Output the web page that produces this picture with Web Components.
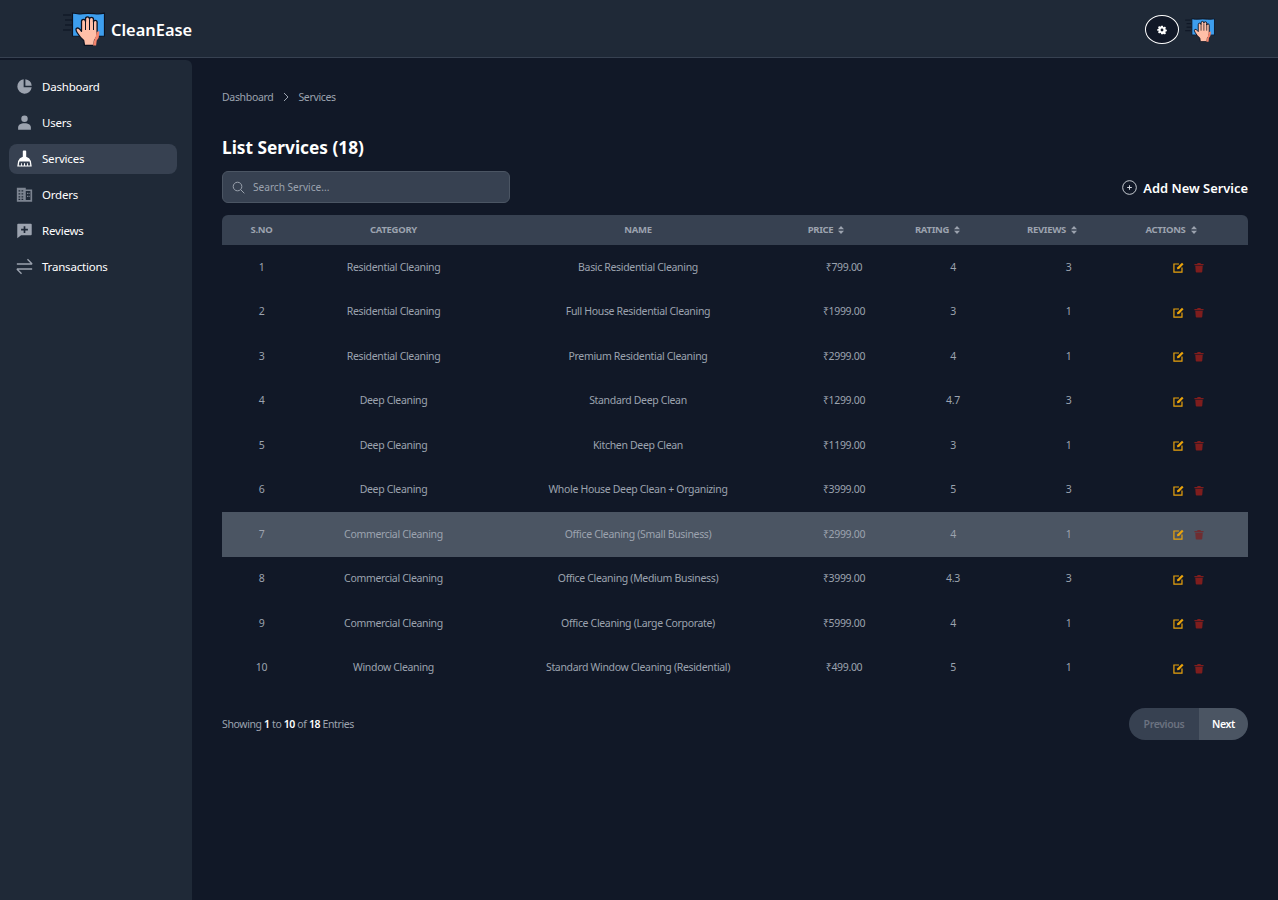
<!DOCTYPE html>
<html>
<head>
<meta charset="utf-8">
<title>CleanEase</title>
<style>
  html, body { margin: 0; height: 100%; background: #111827; }
  body { font-family: "Noto Sans", "Open Sans", sans-serif; overflow: hidden; }
</style>
</head>
<body>
<app-shell>
  <top-bar slot="top"></top-bar>
  <side-nav slot="side"></side-nav>
  <services-page></services-page>
</app-shell>

<script>
// logo drawn on a 42x34 box
const HAND = `
  <path d="M0 3h8M2 8h7M2 13h7M0 18h8" stroke="#0b1220" stroke-width="1.2"/>
  <path d="M9.500 1q5 1.200 10 .6t12 0q5 .6 10-.4v22.800q-8 .6-32 0z" fill="#3d9eee" stroke="#0b1220" stroke-width="1.200"/>
  <path d="M21.500 33.500l-.8-5q-3.500-3-6.300-7.500q-2.300-3.500-.8-4.700q1.600-1 3.600 1.400l1.300 1.500V9.500q0-2.200 2-2.200t2 2.200V7q0-2.200 2-2.200t2 2.200v.3q0-2 2-2t2 2.200v2.500q0-1.700 1.800-1.700t1.800 2V22q0 4-2.600 6.500l-.6 5z" fill="#ffbfa8" stroke="#0b1220" stroke-width="1.300" stroke-linejoin="round"/>
  <path d="M22.500 10v8M26.500 8v10M30.500 8v10" stroke="#0b1220" stroke-width="1"/>
  <path d="M31 29q2-4 2.700-9l2.600-1v3q0 4-2.600 6.500l-.6 5H30z" fill="#f4846c"/>
`;

const ICONS = {
  // sidebar
  dashboard: `<svg viewBox="0 0 20 20" fill="currentColor"><path d="M9 1.500A8.500 8.500 0 1 0 18.500 11H9z"/><path d="M11 1.500V9h7.500A8.500 8.500 0 0 0 11 1.500z"/></svg>`,
  users: `<svg viewBox="0 0 20 20" fill="currentColor"><circle cx="10" cy="5.500" r="3.800"/><path d="M2.500 18.500v-2.500C2.500 12.800 5.500 11 10 11s7.500 1.800 7.500 5v2.500z"/></svg>`,
  services: `<svg viewBox="0 0 20 20" fill="currentColor"><path d="M8 1.500q0-1 1-1h2q1 0 1 1V8q4 1 5.500 5l1 6.500h-17l1-6.500Q4 9 8 8zM4 13.500l-.8 4.700H6v-2.700h1v2.700h2.400v-2.700h1.200v2.700H13v-2.700h1v2.700h2.800l-.8-4.700z"/></svg>`,
  orders: `<svg viewBox="0 0 20 20" fill="currentColor" opacity=".75"><path fill-rule="evenodd" d="M1 2h10.500v2H19v14.500H1zM3 5v1.500h2V5zm3.500 0v1.500h2V5zM3 8.500V10h2V8.500zm3.500 0V10h2V8.500zM3 12v1.500h2V12zm3.500 0v1.500h2V12zM3 15v1.500h2V15zm3.500 0v1.500h2V15zM11.500 6v10.500H17V6zm1.500 2h1.500v1.500H13zm2.200 0h.8v1.500h-.8zM13 11.500h1.500V13H13zm2.200 0h.8V13h-.8z"/></svg>`,
  reviews: `<svg viewBox="0 0 20 20" fill="currentColor"><path fill-rule="evenodd" d="M2.500 2h15q1 0 1 1v11.500q0 1-1 1H6L1.500 19V3q0-1 1-1zM9 5v3H6v2h3v3h2v-3h3V8h-3V5z"/></svg>`,
  transactions: `<svg viewBox="0 0 20 20" fill="none" stroke="currentColor" stroke-width="1.600"><path d="M1 7h18M13.500 1.500L19 7M1 13h18M6.500 18.500L1 13"/></svg>`,
  sort: `<svg viewBox="0 0 6 8" fill="currentColor"><path d="M3 0l3 3.300H0zM3 8L0 4.700h6z"/></svg>`,
  search: `<svg viewBox="0 0 16 16" fill="none" stroke="currentColor" stroke-width="1.200"><circle cx="6.800" cy="6.800" r="5.300"/><path d="M10.600 10.600l4.600 4.600"/></svg>`,
  plus: `<svg viewBox="0 0 16 16" fill="none" stroke="currentColor" stroke-width="1"><circle cx="8" cy="8" r="7.300"/><path d="M8 5.500v5M5.500 8h5" stroke-width="1.100"/></svg>`,
  chevron: `<svg viewBox="0 0 8 10" fill="none" stroke="currentColor" stroke-width="1"><path d="M2 1l4 4-4 4"/></svg>`,
  edit: `<svg viewBox="0 0 12 12" fill="none"><path d="M6.500 2.200H1v8.800h8.800V6" stroke="#eaa30c" stroke-width="1.300"/><path d="M4.300 8l.5-2.400L9.800.7l1.700 1.700-4.900 5.100z" fill="#eaa30c"/></svg>`,
  trash: `<svg viewBox="0 0 12 12" fill="#7f1d1d"><path d="M.5 1.700h3.200L4.300.5h3.400l.6 1.200h3.200v1.500H.5z"/><path d="M1.500 4h9l-.6 7.200q-.1.800-.9.800H3q-.8 0-.9-.8z"/></svg>`,
  gear: `<svg viewBox="0 0 12 12" fill="#fff"><path fill-rule="evenodd" d="M5 .8h2l.3 1.400.9.400L9.400 1.800l1.400 1.400-.8 1.200.4.900 1.400.3v2l-1.400.3-.4.900.8 1.200-1.400 1.400-1.200-.8-.9.4L7 11.200H5l-.3-1.400-.9-.4-1.200.8-1.400-1.400.8-1.200-.4-.9L.2 7V5l1.400-.3.400-.9-.8-1.200 1.400-1.400 1.200.8.900-.4zM6 4.300a1.700 1.700 0 1 0 0 3.400 1.700 1.700 0 0 0 0-3.400z"/></svg>`
};

const COLS = '79px 185px 304px 72px 151px 78px 157px';

class AppShell extends HTMLElement {
  connectedCallback() {
    this.attachShadow({ mode: 'open' });
    this.shadowRoot.innerHTML = `
      <style>
        :host { display: grid; grid-template-columns: 192px 1fr; grid-template-rows: 58px 1fr; height: 100vh; background: #111827; }
        .top { grid-column: 1 / 3; }
        .side { padding-top: 2px; display: flex; }
        main { min-width: 0; }
      </style>
      <div class="top"><slot name="top"></slot></div>
      <div class="side"><slot name="side"></slot></div>
      <main><slot></slot></main>
    `;
  }
}
customElements.define('app-shell', AppShell);

class TopBar extends HTMLElement {
  connectedCallback() {
    this.attachShadow({ mode: 'open' });
    this.shadowRoot.innerHTML = `
      <style>
        :host { display: flex; justify-content: space-between; align-items: center; height: 57px; background: #1f2937; border-bottom: 1px solid #374151; padding: 0 63px; }
        .brand { display: flex; align-items: center; gap: 6px; color: #fff; font-size: 16.400px; font-weight: 600; }
        .brand svg { width: 42px; height: 34px; display: block; margin-top: 1px; }
        .brand span { margin-top: 2px; }
        .tools { display: flex; align-items: center; gap: 6px; }
        .gear { box-sizing: border-box; width: 34px; height: 29px; margin-top: 2px; border: 1px solid #fff; border-radius: 50%; background: #111827; display: flex; align-items: center; justify-content: center; }
        .gear svg { width: 10px; height: 10px; }
        .avatar { width: 30px; height: 24px; display: block; margin-top: 2px; filter: blur(.3px); }
      </style>
      <div class="brand"><svg viewBox="0 0 42 34">${HAND}</svg><span>CleanEase</span></div>
      <div class="tools">
        <div class="gear">${ICONS.gear}</div>
        <svg class="avatar" viewBox="0 0 42 34">${HAND}</svg>
      </div>
    `;
  }
}
customElements.define('top-bar', TopBar);

class SideNav extends HTMLElement {
  connectedCallback() {
    const items = [
      ['dashboard', 'Dashboard'], ['users', 'Users'], ['services', 'Services'],
      ['orders', 'Orders'], ['reviews', 'Reviews'], ['transactions', 'Transactions']
    ];
    this.attachShadow({ mode: 'open' });
    this.shadowRoot.innerHTML = `
      <style>
        :host { display: flex; flex-direction: column; gap: 6px; width: 192px; box-sizing: border-box; background: #1f2937; border-top-right-radius: 6px; padding: 12px 15px 0 9px; }
        a { display: flex; align-items: center; gap: 9px; box-sizing: border-box; height: 30px; padding: 0 7px 1px; border-radius: 8px; color: #fff; font-size: 11.500px; letter-spacing: -.2px; text-decoration: none; }
        a svg { width: 17px; height: 17px; color: #9ca3af; flex: none; }
        a.active { background: #374151; }
        a.active svg { color: #fff; }
      </style>
      ${items.map(([icon, label]) => `<a href="#" class="${label === 'Services' ? 'active' : ''}">${ICONS[icon]}<span>${label}</span></a>`).join('')}
    `;
  }
}
customElements.define('side-nav', SideNav);

class ServiceRow extends HTMLElement {
  connectedCallback() {
    const d = this.dataset;
    this.attachShadow({ mode: 'open' });
    this.shadowRoot.innerHTML = `
      <style>
        :host { display: grid; grid-template-columns: ${COLS}; box-sizing: border-box; height: 44.500px; padding-bottom: 1px; align-items: center; text-align: center; font-size: 10.500px; letter-spacing: -.33px; color: #9ca3af; white-space: nowrap; }
        :host([hover]) { background: #4b5563; }
        .price { margin-right: -36px; }
        .rating { margin-right: -31px; }
        .reviews { margin-right: -33px; }
        .acts { display: flex; justify-content: center; align-items: center; gap: 10px; padding-left: 37px; padding-top: 2px; }
        .acts svg { width: 11px; height: 11px; display: block; }
        .acts svg:last-child { width: 10px; }
        :host([hover]) .acts svg:last-child { opacity: .7; }
      </style>
      <div>${d.no}</div><div>${d.cat}</div><div>${d.name}</div>
      <div class="price">₹${d.price}</div><div class="rating">${d.rating}</div><div class="reviews">${d.reviews}</div>
      <div class="acts">${ICONS.edit}${ICONS.trash}</div>
    `;
  }
}
customElements.define('service-row', ServiceRow);

class ServicesPage extends HTMLElement {
  connectedCallback() {
    const rows = [
      ['Residential Cleaning', 'Basic Residential Cleaning', '799.00', '4', '3'],
      ['Residential Cleaning', 'Full House Residential Cleaning', '1999.00', '3', '1'],
      ['Residential Cleaning', 'Premium Residential Cleaning', '2999.00', '4', '1'],
      ['Deep Cleaning', 'Standard Deep Clean', '1299.00', '4.7', '3'],
      ['Deep Cleaning', 'Kitchen Deep Clean', '1199.00', '3', '1'],
      ['Deep Cleaning', 'Whole House Deep Clean + Organizing', '3999.00', '5', '3'],
      ['Commercial Cleaning', 'Office Cleaning (Small Business)', '2999.00', '4', '1'],
      ['Commercial Cleaning', 'Office Cleaning (Medium Business)', '3999.00', '4.3', '3'],
      ['Commercial Cleaning', 'Office Cleaning (Large Corporate)', '5999.00', '4', '1'],
      ['Window Cleaning', 'Standard Window Cleaning (Residential)', '499.00', '5', '1']
    ];
    this.attachShadow({ mode: 'open' });
    this.shadowRoot.innerHTML = `
      <style>
        :host { display: block; padding: 32px 30px 0; color: #fff; }
        .crumbs { display: flex; align-items: center; gap: 8px; height: 14px; font-size: 10.500px; letter-spacing: -.33px; color: #9ca3af; }
        .crumbs svg { width: 8px; height: 10px; margin-left: 1px; }
        h1 { margin: 33px 0 0; font-size: 17.300px; line-height: 22px; font-weight: 700; }
        .tools { display: flex; justify-content: space-between; align-items: center; margin-top: 12px; }
        .search { display: flex; align-items: center; gap: 8px; box-sizing: border-box; width: 288px; height: 32px; padding: 0 9px; background: #374151; border: 1px solid #4b5563; border-radius: 6px; font-size: 10.100px; color: #9ca3af; }
        .search svg { width: 13px; height: 13px; }
        .add { display: flex; align-items: center; gap: 6px; font-size: 12.900px; font-weight: 600; }
        .add span { padding-top: 2px; }
        .add svg { width: 15px; height: 15px; color: #d1d5db; }
        .head { display: grid; grid-template-columns: ${COLS}; box-sizing: border-box; height: 30px; padding-bottom: 1px; margin-top: 12px; align-items: center; text-align: center; background: #374151; border-radius: 6px 6px 0 0; font-size: 9.500px; letter-spacing: -.3px; font-weight: 700; color: #9ca3af; }
        .head span { display: inline-flex; align-items: center; justify-content: center; gap: 5px; }
        .head span:last-child { padding-left: 3px; }
        .head svg { width: 6px; height: 8px; }
        .foot { display: flex; justify-content: space-between; align-items: center; margin-top: 18px; font-size: 10.500px; letter-spacing: -.38px; color: #9ca3af; }
        .foot b { color: #fff; font-weight: 600; }
        .pager { display: flex; height: 32px; border-radius: 16px; overflow: hidden; font-weight: 600; }
        .pager div { display: flex; align-items: center; }
        .prev { width: 70px; justify-content: center; background: #374151; color: #6b7280; }
        .next { width: 49px; justify-content: center; background: #4b5563; color: #fff; }
      </style>
      <div class="crumbs"><span>Dashboard</span>${ICONS.chevron}<span>Services</span></div>
      <h1>List Services (18)</h1>
      <div class="tools">
        <div class="search">${ICONS.search}<span>Search Service...</span></div>
        <div class="add">${ICONS.plus}<span>Add New Service</span></div>
      </div>
      <div class="head">
        <span>S.NO</span><span>CATEGORY</span><span>NAME</span>
        <span>PRICE${ICONS.sort}</span><span>RATING${ICONS.sort}</span><span>REVIEWS${ICONS.sort}</span><span>ACTIONS${ICONS.sort}</span>
      </div>
      <div id="rows"></div>
      <div class="foot">
        <div>Showing <b>1</b> to <b>10</b> of <b>18</b> Entries</div>
        <div class="pager"><div class="prev">Previous</div><div class="next">Next</div></div>
      </div>
    `;
    const box = this.shadowRoot.getElementById('rows');
    rows.forEach((r, i) => {
      const el = document.createElement('service-row');
      el.dataset.no = i + 1;
      el.dataset.cat = r[0];
      el.dataset.name = r[1];
      el.dataset.price = r[2];
      el.dataset.rating = r[3];
      el.dataset.reviews = r[4];
      if (i === 6) el.setAttribute('hover', '');
      box.appendChild(el);
    });
  }
}
customElements.define('services-page', ServicesPage);
</script>
</body>
</html>
